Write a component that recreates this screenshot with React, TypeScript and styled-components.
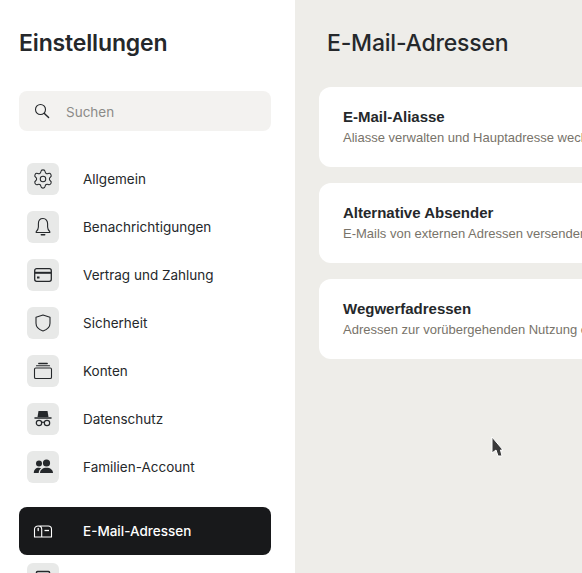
import styled, { createGlobalStyle } from "styled-components";
import { Settings } from "lucide-react";

const GlobalStyle = createGlobalStyle`
  html, body {
    margin: 0;
    padding: 0;
    height: 100%;
    overflow: hidden;
    background: #eeede9;
  }
  * { box-sizing: border-box; }
`;

const Page = styled.div`
  position: relative;
  display: flex;
  width: 100vw;
  height: 100vh;
  overflow: hidden;
  font-family: "Inter", "Liberation Sans", sans-serif;
  color: #25282b;
`;

const Sidebar = styled.aside`
  flex: 0 0 295px;
  height: 100%;
  padding: 0 24px 0 19px;
  background: #fff;
  overflow: hidden;
`;

const SideTitle = styled.h1`
  margin: 0;
  height: 91px;
  padding-top: 27px;
  font-size: 23px;
  line-height: 32px;
  font-weight: 600;
  letter-spacing: -0.15px;
  color: #25282b;
`;

const Search = styled.div`
  display: flex;
  align-items: center;
  gap: 16px;
  height: 40px;
  padding-left: 15px;
  border-radius: 8px;
  background: #f3f2f0;
  font-size: 13.5px;
  color: #8b8b88;
  margin-bottom: 24px;
`;

const SearchLabel = styled.span`
  margin-top: 2px;
`;

const Nav = styled.nav`
  display: flex;
  flex-direction: column;
`;

const Row = styled.div<{ $active?: boolean }>`
  display: flex;
  flex: 0 0 48px;
  align-items: center;
  gap: 24px;
  height: 48px;
  padding-left: 8px;
  border-radius: 8px;
  font-size: 13.5px;
  font-weight: ${(p) => (p.$active ? 500 : 400)};
  background: ${(p) => (p.$active ? "#18191b" : "transparent")};
  color: ${(p) => (p.$active ? "#fff" : "#25282b")};
  margin-top: ${(p) => (p.$active ? "16px" : "0")};
`;

const IconBox = styled.span<{ $active?: boolean }>`
  display: flex;
  align-items: center;
  justify-content: center;
  width: 32px;
  height: 32px;
  border-radius: 6px;
  background: ${(p) => (p.$active ? "transparent" : "#e8e9e8")};
  color: ${(p) => (p.$active ? "#fff" : "#25282b")};
`;

const Main = styled.main`
  flex: 1 0 auto;
  padding: 0 24px;
`;

const MainTitle = styled.h2`
  margin: 0;
  height: 87px;
  padding: 27px 0 0 8px;
  font-size: 23px;
  line-height: 32px;
  font-weight: 500;
  letter-spacing: -0.2px;
  color: #25282b;
`;

const Cards = styled.div`
  display: flex;
  flex-direction: column;
  gap: 16px;
  width: 640px;
`;

const Card = styled.div`
  display: flex;
  flex-direction: column;
  justify-content: center;
  height: 80px;
  padding: 0 24px;
  border-radius: 12px;
  background: #fff;
  font-family: "Liberation Sans", Arial, sans-serif;
`;

const CardTitle = styled.div`
  font-size: 15px;
  line-height: 20px;
  font-weight: 700;
  color: #25282b;
`;

const CardText = styled.div`
  margin-top: 1px;
  font-size: 13px;
  line-height: 20px;
  white-space: nowrap;
  color: #78736a;
`;

const Cursor = styled.svg`
  position: absolute;
  left: 490px;
  top: 435px;
`;

const line = {
  fill: "none",
  stroke: "currentColor",
  strokeWidth: 1.4,
  strokeLinecap: "round" as const,
  strokeLinejoin: "round" as const,
};

function SearchIcon() {
  return (
    <svg width="16" height="16" viewBox="0 0 16 16">
      <circle cx="6.5" cy="6.5" r="5" {...line} strokeWidth={1.1} color="#25282b" />
      <path d="M10.4 10.4 14.6 14.6" {...line} strokeWidth={1.4} color="#25282b" />
    </svg>
  );
}

const icons = {
  gear: <Settings size={22} strokeWidth={1.15} />,
  bell: (
    <svg width="20" height="20" viewBox="0 0 20 20">
      <path d="M10 1.500c-3 0-4.600 2.400-4.600 5.200v3.300c0 2-1 3.400-2.200 4.700v.8h13.600v-.8c-1.200-1.300-2.200-2.700-2.200-4.700V6.700c0-2.800-1.600-5.200-4.600-5.200z" {...line} strokeWidth={1.100} />
      <path d="M8.300 17.800h3.400" {...line} strokeWidth={1.500} />
    </svg>
  ),
  card: (
    <svg width="20" height="20" viewBox="0 0 20 20">
      <rect x="1.700" y="3.700" width="16.600" height="12.600" rx="2" {...line} strokeWidth={1.300} />
      <path d="M2 7.800h16" stroke="currentColor" strokeWidth={2} />
      <rect x="4" y="11.500" width="2.500" height="2" fill="currentColor" />
    </svg>
  ),
  shield: (
    <svg width="20" height="20" viewBox="0 0 20 20">
      <path d="M10 2 3 4.300v6c0 4 3.200 6.500 7 7.700 3.800-1.200 7-3.700 7-7.700v-6z" {...line} strokeWidth={1.100} />
    </svg>
  ),
  stack: (
    <svg width="20" height="20" viewBox="0 0 20 20">
      <rect x="1.500" y="7" width="17" height="10.500" rx="1.300" {...line} strokeWidth={1.100} />
      <path d="M3.500 4.700h13" {...line} strokeWidth={1.100} />
      <path d="M5.800 2.500h8.400" {...line} strokeWidth={1.400} />
    </svg>
  ),
  spy: (
    <svg width="20" height="20" viewBox="0 0 20 20">
      <path d="M5.500 2h9l1 6h-11z" fill="currentColor" />
      <path d="M2 9h16" stroke="currentColor" strokeWidth={1.500} strokeLinecap="round" />
      <circle cx="6" cy="14" r="2.700" {...line} strokeWidth={1.200} />
      <circle cx="14" cy="14" r="2.700" {...line} strokeWidth={1.200} />
      <path d="M8.700 13.500c.8-.5 1.800-.5 2.600 0" {...line} strokeWidth={1.100} />
    </svg>
  ),
  people: (
    <svg width="20" height="20" viewBox="0 0 20 20">
      <circle cx="6" cy="6.500" r="3" fill="currentColor" />
      <circle cx="13.500" cy="6" r="3.600" fill="currentColor" />
      <path d="M.8 16c0-3.300 2-5.300 5-5.300 1 0 1.800.2 2.400.6C6.600 12.500 5.800 14 5.700 16z" fill="currentColor" />
      <path d="M7 16c0-3.300 2.800-5.300 6.500-5.300S20 12.700 20 16z" fill="currentColor" />
    </svg>
  ),
  mailbox: (
    <svg width="20" height="20" viewBox="0 0 20 20">
      <path
        d="M5.200 5h10c1.900 0 3.300 1.400 3.300 3.200v7.800h-17V8.200C1.500 6.400 3.100 5 5.200 5c2 0 3.500 1.400 3.500 3.200V16"
        {...line}
        strokeWidth={1.100}
      />
      <path d="M5.200 7.500v2" {...line} strokeWidth={1.300} />
      <path d="M11.500 9.500h4.500" stroke="currentColor" strokeWidth={1.300} />
    </svg>
  ),
  document: (
    <svg width="20" height="20" viewBox="0 0 20 20">
      <rect x="3.500" y="2.500" width="13" height="15" rx="1" {...line} strokeWidth={1.500} />
    </svg>
  ),
};

const rows = [
  { label: "Allgemein", icon: icons.gear },
  { label: "Benachrichtigungen", icon: icons.bell },
  { label: "Vertrag und Zahlung", icon: icons.card },
  { label: "Sicherheit", icon: icons.shield },
  { label: "Konten", icon: icons.stack },
  { label: "Datenschutz", icon: icons.spy },
  { label: "Familien-Account", icon: icons.people },
];

const cards = [
  { title: "E-Mail-Aliasse", text: "Aliasse verwalten und Hauptadresse wechseln" },
  { title: "Alternative Absender", text: "E-Mails von externen Adressen versenden" },
  { title: "Wegwerfadressen", text: "Adressen zur vorübergehenden Nutzung erstellen" },
];

export default function App() {
  return (
    <Page>
      <GlobalStyle />
      <Sidebar>
        <SideTitle>Einstellungen</SideTitle>
        <Search>
          <SearchIcon />
          <SearchLabel>Suchen</SearchLabel>
        </Search>
        <Nav>
          {rows.map((row) => (
            <Row key={row.label}>
              <IconBox>{row.icon}</IconBox>
              {row.label}
            </Row>
          ))}
          <Row $active>
            <IconBox $active>{icons.mailbox}</IconBox>
            E-Mail-Adressen
          </Row>
          <Row>
            <IconBox>{icons.document}</IconBox>
          </Row>
        </Nav>
      </Sidebar>
      <Main>
        <MainTitle>E-Mail-Adressen</MainTitle>
        <Cards>
          {cards.map((card) => (
            <Card key={card.title}>
              <CardTitle>{card.title}</CardTitle>
              <CardText>{card.text}</CardText>
            </Card>
          ))}
        </Cards>
      </Main>
      <Cursor width="14" height="24" viewBox="0 0 14 24">
        <path d="M2 2v16l4-3 2 6h4l-1.500-6H13z" fill="#3a3a3a" stroke="#fff" strokeWidth={1} />
      </Cursor>
    </Page>
  );
}
